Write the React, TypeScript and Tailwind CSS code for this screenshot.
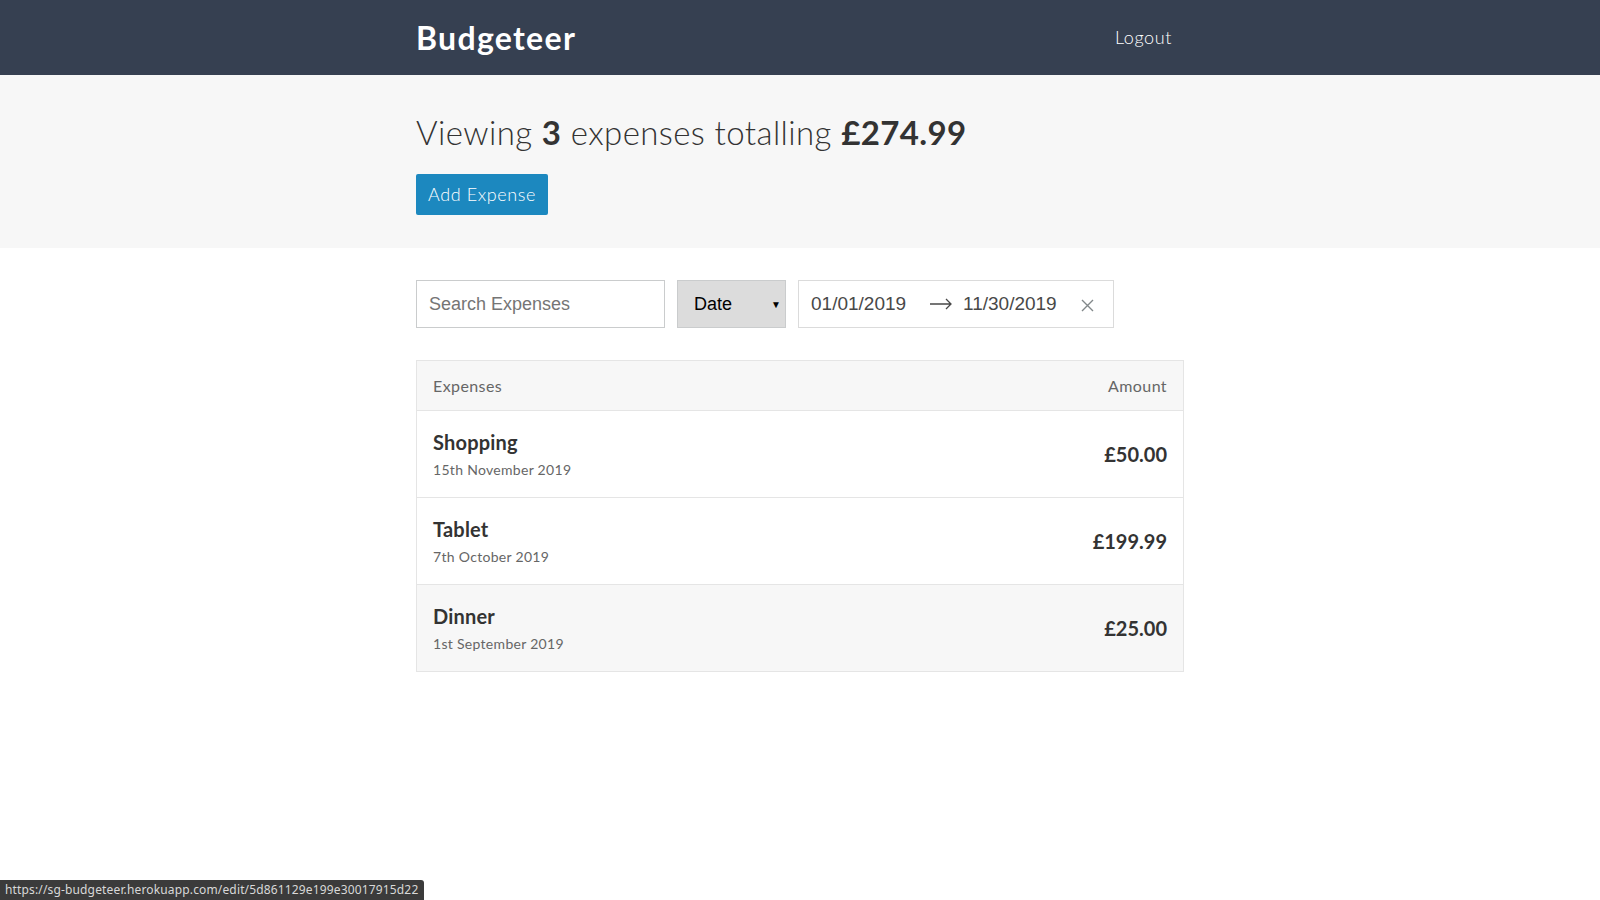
import React from "react";

const expenses = [
  { title: "Shopping", date: "15th November 2019", amount: "£50.00", hover: false },
  { title: "Tablet", date: "7th October 2019", amount: "£199.99", hover: false },
  { title: "Dinner", date: "1st September 2019", amount: "£25.00", hover: true },
];

export default function App() {
  return (
    <div className="min-h-[900px] bg-white text-[#333333] relative" style={{ fontFamily: "Lato, 'Open Sans', sans-serif" }}>
      <header className="bg-[#364051] h-[75px]">
        <div className="max-w-[768px] mx-auto h-full flex items-center justify-between">
          <h1 className="text-white text-[32px] font-bold leading-none tracking-[1.3px]">Budgeteer</h1>
          <button className="text-white text-[18px] font-light px-3 py-2 tracking-[0.6px]">Logout</button>
        </div>
      </header>

      <div className="bg-[#f7f7f7] h-[173px]">
        <div className="max-w-[768px] mx-auto pt-[35px]">
          <h2 className="text-[33px] font-light leading-[44px] text-[#333333] tracking-[0.4px]">
            Viewing <span className="font-bold">3</span> expenses totalling <span className="font-bold">£274.99</span>
          </h2>
          <button className="mt-[20px] bg-[#1c88bf] text-white text-[18px] font-light h-[41px] px-3 rounded-[2px] tracking-[0.6px]">
            Add Expense
          </button>
        </div>
      </div>

      <div className="max-w-[768px] mx-auto">
        <div className="flex items-center gap-3 mt-8" style={{ fontFamily: "'Liberation Sans', Arial, sans-serif" }}>
          <input
            className="w-[249px] h-[48px] border border-[#cacccd] px-3 text-[18px] text-[#333] placeholder:text-[#757575] outline-none"
            placeholder="Search Expenses"
          />
          <div className="w-[109px] h-[48px] bg-[#dcdcdc] border border-[#cacccd] flex items-center justify-between pl-4 pr-1 text-[18px] text-black">
            <span>Date</span>
            <span className="text-[10px]">▼</span>
          </div>
          <div className="w-[316px] h-[48px] border border-[#dbdbdb] flex items-center pl-3 text-[19px] text-[#484848]">
            <span className="w-[98px]">01/01/2019</span>
            <svg width="24" height="24" viewBox="0 0 24 24" className="ml-[20px] mr-[10px]">
              <path d="M1 12 H22 M17 7 L22 12 L17 17" stroke="#484848" strokeWidth="1.3" fill="none" />
            </svg>
            <span className="w-[96px]">11/30/2019</span>
            <svg width="13" height="13" viewBox="0 0 13 13" className="ml-[22px] mt-[3px]">
              <path d="M1 1 L12 12 M12 1 L1 12" stroke="#82888a" strokeWidth="1.4" />
            </svg>
          </div>
        </div>

        <div className="mt-8 border border-[#e5e5e5]">
          <div className="h-[50px] bg-[#f7f7f7] border-b border-[#e5e5e5] flex items-center justify-between px-4 text-[16px] text-[#666666] tracking-[0.4px]">
            <span>Expenses</span>
            <span>Amount</span>
          </div>
          {expenses.map((e, i) => (
            <div
              key={e.title}
              className={`${i < expenses.length - 1 ? "h-[87px] border-b border-[#e5e5e5]" : "h-[86px]"} flex items-center justify-between px-4 ${e.hover ? "bg-[#f7f7f7]" : "bg-white"}`}
            >
              <div>
                <div className="text-[20px] font-bold leading-[26px] text-[#333333] tracking-[0.2px]">{e.title}</div>
                <div className="text-[14px] text-[#666666] mt-[4px] tracking-[0.3px]">{e.date}</div>
              </div>
              <div className="text-[20px] font-bold text-[#333333]">{e.amount}</div>
            </div>
          ))}
        </div>
      </div>

      <div className="absolute left-0 bottom-0 h-[20px] w-[424px] bg-[#3b3b3b] rounded-tr-[3px] flex items-center pl-[5px] text-[12px] text-[#d8d8d8] tracking-[0.15px]" style={{ fontFamily: "'Noto Sans', sans-serif" }}>
        https://sg-budgeteer.herokuapp.com/edit/5d861129e199e30017915d22
      </div>
    </div>
  );
}
